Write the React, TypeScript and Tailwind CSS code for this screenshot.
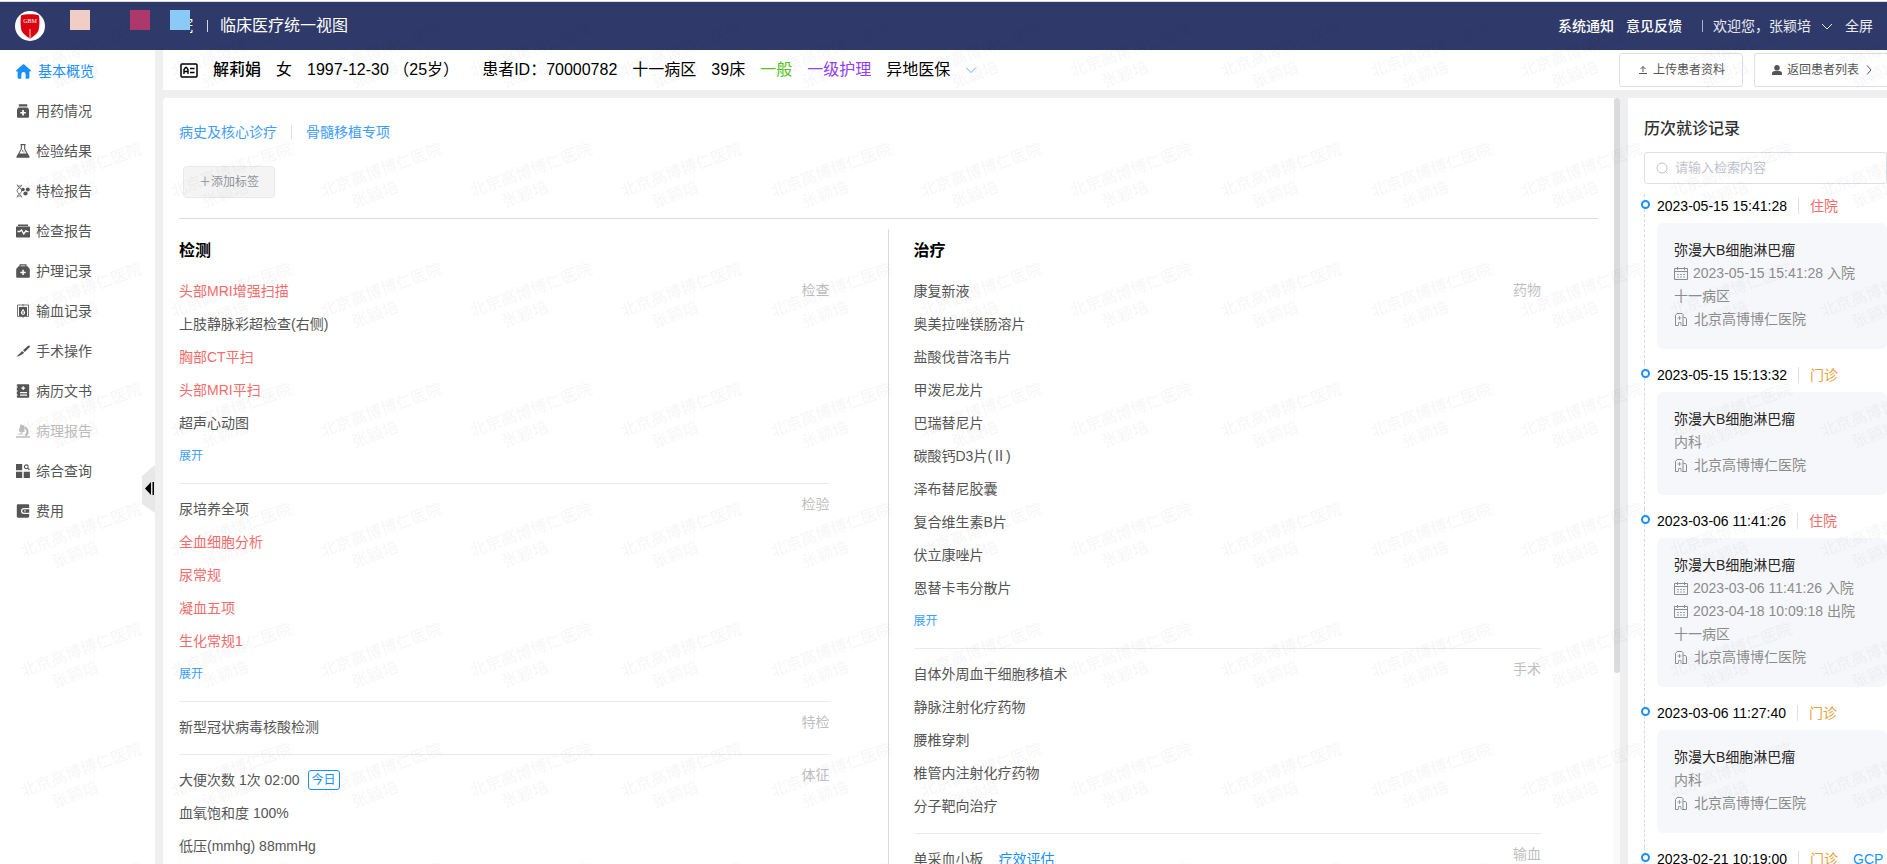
import { clsx } from "clsx";
import type { ReactNode } from "react";

type MenuItem = {
  label: string;
  icon: ReactNode;
  active?: boolean;
  disabled?: boolean;
};

type Entry = {
  text: string;
  abnormal?: boolean;
  tag?: string;
  link?: string;
};

type Block = {
  label: string;
  entries: Entry[];
  expandable?: boolean;
};

type Visit = {
  time: string;
  type: "住院" | "门诊";
  extra?: string;
  diagnosis: string;
  dates?: string[];
  dept: string;
};

const HOSPITAL = "北京高博博仁医院";

const menuItems: MenuItem[] = [
  {
    label: "基本概览",
    active: true,
    icon: (
      <path d="M7 .3a1 1 0 0 1 .7.2l6 5.3c.5.5.3 1.2-.4 1.2h-.8v5.6c0 .7-.4 1.1-1.1 1.1H9V9.5a2 2 0 0 0-4 0v4.2H2.6c-.7 0-1.1-.4-1.1-1.1V7H.7C0 7-.2 6.300.3 5.800l6-5.300A1 1 0 0 1 7 .3Z" />
    ),
  },
  {
    label: "用药情况",
    icon: (
      <path
        fillRule="evenodd"
        d="M2.800.2h8.400v2.300H2.800ZM2.500 3.600h9L13 5.500v7c0 .8-.5 1.300-1.300 1.300H2.300c-.8 0-1.300-.5-1.300-1.300v-7ZM6.200 6v1.900H4.300v1.700h1.900v1.900h1.700V9.600h1.900V7.900H7.900V6Z"
      />
    ),
  },
  {
    label: "检验结果",
    icon: (
      <>
        <path
          d="M4.500.6h5M5.300.8v4.400L1.200 12.500h11.600L8.700 5.200V.8"
          fill="none"
          stroke="currentColor"
          strokeWidth="1.100"
        />
        <path d="M2.800 9.500h8.400l2.500 4.300H.3ZM6 6.300h1.200v1.200H6ZM7.500 7.500h1v1h-1Z" />
      </>
    ),
  },
  {
    label: "特检报告",
    icon: (
      <>
        <path
          d="M1 .6c.5 3.200 4.800 3.200 4.800 6.200S1 10.200 1 13.500M5.800.6C5.300 4 1 4 1 6.800s4.300 3.300 4.800 6.700M1.600 2h3.500M1.600 12h3.500"
          fill="none"
          stroke="currentColor"
          strokeWidth=".8"
        />
        <circle cx="7" cy="5.500" r="1.800" />
        <circle cx="11.800" cy="5.500" r="2" />
        <circle cx="9.500" cy="9.500" r="2.100" />
      </>
    ),
  },
  {
    label: "检查报告",
    icon: (
      <>
        <path d="M2 .5h10v1.400H2ZM1 2.500h12c.6 0 1 .4 1 1v9c0 .6-.4 1-1 1H1c-.6 0-1-.4-1-1v-9c0-.6.4-1 1-1Z" />
        <path
          d="M1.500 7.500h2.300L5.500 6l2.300 4 2.100-3.200 1 .8h1.700"
          fill="none"
          stroke="#fff"
          strokeWidth="1.400"
        />
      </>
    ),
  },
  {
    label: "护理记录",
    icon: (
      <path
        fillRule="evenodd"
        d="M3.500.3h7v2h1L13.800 5v7.700c0 .6-.4 1-1 1H1.200c-.6 0-1-.4-1-1V5l2.300-2.700h1Zm1.200 1.200v.8h4.600v-.8ZM6.300 5.800v1.900H4.400v1.500h1.900v1.900h1.500V9.200h1.900V7.700H7.800V5.800Z"
      />
    ),
  },
  {
    label: "输血记录",
    icon: (
      <>
        <path
          d="M1.500 1h11v11.500h-11ZM7 0v2.500M7 12v2"
          fill="none"
          stroke="currentColor"
          strokeWidth=".8"
        />
        <path
          fillRule="evenodd"
          d="M3 3h8v9H3ZM7 4.800 5 8a2.100 2.100 0 1 0 4 0Z"
        />
        <path d="M6.500 7h1v3h-1Z" />
      </>
    ),
  },
  {
    label: "手术操作",
    icon: (
      <path d="M13.600 1.800c.6.600.4 1.200-.2 1.700L8.800 8 7 6.300l4.800-4.200c.6-.5 1.300-.8 1.800-.3ZM6.300 6.900 8.100 8.700C6 10.800 3.300 12.200.5 12.500Z" />
    ),
  },
  {
    label: "病历文书",
    icon: (
      <path
        fillRule="evenodd"
        d="M1.500.2h11c.4 0 .7.300.7.700v12.200c0 .4-.3.700-.7.700h-11c-.4 0-.7-.3-.7-.7v-1.500h1v-1h-1V7.500h1v-1h-1V3.500h1v-1h-1V.9c0-.4.3-.7.700-.7ZM6.600 2.300v1.300H5.300v1.200h1.300v1.300h1.200V4.800h1.300V3.600H7.800V2.300ZM4 8v1.200h7V8Zm0 2.500v1.200h7v-1.200Z"
      />
    ),
  },
  {
    label: "病理报告",
    disabled: true,
    icon: (
      <>
        <path d="M4.500.3 8.300 1.500 8.500 7.500 5.500 9 2.800 7Z" />
        <path
          d="M8.500 3.500c3.500 1 4.300 6 .8 8.500"
          fill="none"
          stroke="currentColor"
          strokeWidth="2"
        />
        <path d="M0 12.200h14v1.500H0ZM2.300 9.600h4.500v1H2.300Z" />
      </>
    ),
  },
  {
    label: "综合查询",
    icon: (
      <>
        <path d="M0 0h6.200v6.200H0ZM0 7.700h6.200v6.200H0ZM7.700 7.700h6.200v6.200H7.700Z" />
        <path
          d="M10.300.9a1.900 1.900 0 1 0 0 3.800 1.900 1.900 0 0 0 0-3.800ZM11.700 4.200l1.700 1.800"
          fill="none"
          stroke="currentColor"
          strokeWidth="1.100"
        />
      </>
    ),
  },
  {
    label: "费用",
    icon: (
      <>
        <path
          fillRule="evenodd"
          d="M2.200.3h9.600c.9 0 1.400.5 1.400 1.400V4H8a3 3 0 0 0 0 6h5.200v2.300c0 .9-.5 1.400-1.400 1.400H2.200c-.9 0-1.400-.5-1.400-1.400V1.700c0-.9.5-1.400 1.400-1.400Z"
        />
        <path
          fillRule="evenodd"
          d="M8 5.200h5.200v3.600H8a1.800 1.800 0 0 1 0-3.600Zm.2 1.100v1.300h1.500V6.300Z"
        />
      </>
    ),
  },
];

const testBlocks: Block[] = [
  {
    label: "检查",
    expandable: true,
    entries: [
      { text: "头部MRI增强扫描", abnormal: true },
      { text: "上肢静脉彩超检查(右侧)" },
      { text: "胸部CT平扫", abnormal: true },
      { text: "头部MRI平扫", abnormal: true },
      { text: "超声心动图" },
    ],
  },
  {
    label: "检验",
    expandable: true,
    entries: [
      { text: "尿培养全项" },
      { text: "全血细胞分析", abnormal: true },
      { text: "尿常规", abnormal: true },
      { text: "凝血五项", abnormal: true },
      { text: "生化常规1", abnormal: true },
    ],
  },
  { label: "特检", entries: [{ text: "新型冠状病毒核酸检测" }] },
  {
    label: "体征",
    entries: [
      { text: "大便次数 1次 02:00", tag: "今日" },
      { text: "血氧饱和度 100%" },
      { text: "低压(mmhg) 88mmHg" },
    ],
  },
];

const treatmentBlocks: Block[] = [
  {
    label: "药物",
    expandable: true,
    entries: [
      { text: "康复新液" },
      { text: "奥美拉唑镁肠溶片" },
      { text: "盐酸伐昔洛韦片" },
      { text: "甲泼尼龙片" },
      { text: "巴瑞替尼片" },
      { text: "碳酸钙D3片(Ⅱ)" },
      { text: "泽布替尼胶囊" },
      { text: "复合维生素B片" },
      { text: "伏立康唑片" },
      { text: "恩替卡韦分散片" },
    ],
  },
  {
    label: "手术",
    entries: [
      { text: "自体外周血干细胞移植术" },
      { text: "静脉注射化疗药物" },
      { text: "腰椎穿刺" },
      { text: "椎管内注射化疗药物" },
      { text: "分子靶向治疗" },
    ],
  },
  { label: "输血", entries: [{ text: "单采血小板", link: "疗效评估" }] },
];

const visits: Visit[] = [
  {
    time: "2023-05-15 15:41:28",
    type: "住院",
    diagnosis: "弥漫大B细胞淋巴瘤",
    dates: ["2023-05-15 15:41:28 入院"],
    dept: "十一病区",
  },
  {
    time: "2023-05-15 15:13:32",
    type: "门诊",
    diagnosis: "弥漫大B细胞淋巴瘤",
    dept: "内科",
  },
  {
    time: "2023-03-06 11:41:26",
    type: "住院",
    diagnosis: "弥漫大B细胞淋巴瘤",
    dates: ["2023-03-06 11:41:26 入院", "2023-04-18 10:09:18 出院"],
    dept: "十一病区",
  },
  {
    time: "2023-03-06 11:27:40",
    type: "门诊",
    diagnosis: "弥漫大B细胞淋巴瘤",
    dept: "内科",
  },
  {
    time: "2023-02-21 10:19:00",
    type: "门诊",
    extra: "GCP",
    diagnosis: "弥漫大B细胞淋巴瘤",
    dept: "内科",
  },
];

const Chevron = ({ className, d }: { className: string; d: string }) => (
  <svg viewBox="0 0 12 12" className={className} fill="none" stroke="currentColor">
    <path d={d} />
  </svg>
);

const Logo = () => (
  <svg viewBox="0 0 30 30" className="size-[30px]">
    <circle cx="15" cy="15" r="15" fill="#fff" />
    <path
      d="M6 4.500c3-1.700 15-1.700 18 0 .6 5 .8 10-.5 15-1.500 3.500-5 6-8.500 8-3.500-2-7-4.500-8.500-8-1.300-5-1.100-10-.5-15Z"
      fill="#d9040f"
    />
    <path d="M15 18v9" stroke="#f08a8a" strokeWidth="1.500" />
    <text
      x="15"
      y="12"
      textAnchor="middle"
      fontSize="6"
      fill="#fff"
      fontFamily="Liberation Serif, serif"
    >
      GBM
    </text>
  </svg>
);

const CalendarIcon = () => (
  <svg viewBox="0 0 14 14" className="size-3.5" fill="none" stroke="currentColor">
    <path d="M.5 1.500h13v11H.5ZM.5 4.500h13M3.500 0v3M10.500 0v3" />
    <path d="M3 7.500h2M6 7.500h2M9 7.500h2M3 10h2M6 10h2M9 10h2" strokeWidth=".8" />
  </svg>
);

const HospitalIcon = () => (
  <svg viewBox="0 0 14 14" className="size-3.5" fill="none" stroke="currentColor">
    <path d="M4 12.500H1.500v-10L3 .5h5l1 1v11H8M9.500 4.500h2l1 1.500v6.500H8" />
    <path d="M5.500 3v4M3.500 5h4M4.500 12.500V9.500h2.500v3" strokeWidth=".8" />
  </svg>
);

const Header = () => (
  <header className="flex h-[49px] shrink-0 items-center justify-between border-t border-[#d9dbe2] bg-[#2f3a6b] pl-[15px] pr-3.5 text-white">
    <div className="flex h-full items-center">
      <Logo />
      <div className="ml-[25px] flex self-start pt-2">
        <span className="mr-10 size-5 bg-[#f0cdc5]" />
        <span className="mr-5 size-5 bg-[#ad396b]" />
        <span className="size-5 bg-[#8ccaf6]" />
      </div>
      <span className="flex w-[3px] justify-end overflow-hidden text-base">院</span>
      <span className="ml-3.5 h-3 w-px bg-white/80" />
      <h1 className="ml-3 text-base">临床医疗统一视图</h1>
    </div>
    <div className="flex items-center text-sm">
      <a href="#notice" className="mr-3 font-medium">
        系统通知
      </a>
      <a href="#feedback" className="font-medium">
        意见反馈
      </a>
      <span className="ml-5 h-3 w-px bg-white/60" />
      <button className="ml-2.5 flex items-center gap-2.5 text-white/90">
        欢迎您，张颖培
        <Chevron className="size-3" d="M1 4l5 5 5-5" />
      </button>
      <button className="ml-3 text-white/90">全屏</button>
    </div>
  </header>
);

const Sidebar = () => (
  <nav className="relative w-[155px] shrink-0 bg-white pt-px">
    <ul>
      {menuItems.map((item) => (
        <li key={item.label}>
          <a
            href="#menu"
            className={clsx(
              "flex h-10 items-center pl-4 text-sm",
              item.active && "gap-[7px] text-[#1890ff]",
              !item.active && "gap-1.5",
              item.disabled && "text-[#bdbdbd]",
              !item.active && !item.disabled && "text-[#555]"
            )}
          >
            <svg
              viewBox="0 0 14 14"
              fill="currentColor"
              className={item.active ? "size-[15px]" : "size-3.5"}
            >
              {item.icon}
            </svg>
            {item.label}
          </a>
        </li>
      ))}
    </ul>
    <button aria-label="收起菜单" className="absolute right-0 top-[415px]">
      <svg viewBox="0 0 13 48" className="h-12 w-[13px]">
        <path d="M13 0v48L0 39V11Z" fill="#e8e8e8" />
        <path d="M9 17v13l-6-6.500ZM10.500 17h1.500v13h-1.500Z" fill="#000" />
      </svg>
    </button>
  </nav>
);

const PatientBar = () => (
  <section className="flex h-10 shrink-0 items-center justify-between bg-white pl-[17px]">
    <div className="flex items-center gap-[15px] whitespace-nowrap text-base text-black">
      <svg viewBox="0 0 18 15" className="h-[15px] w-[18px]" fill="none" stroke="currentColor">
        <rect x="1" y="1" width="16" height="13" rx="1" strokeWidth="1.500" />
        <path d="M4 11V6.500L5.500 4.500h1L8 6.500V11M4 8.500h4M10 5.500h4.500M10 9.500h4.500" strokeWidth="1.400" />
      </svg>
      <strong className="font-medium">解莉娟</strong>
      <span>女</span>
      <span className="mr-2">1997-12-30 （25岁）</span>
      <span>患者ID：70000782</span>
      <span>十一病区</span>
      <span>39床</span>
      <span className="text-[#52c41a]">一般</span>
      <span className="text-[#9240fb]">一级护理</span>
      <span>异地医保</span>
      <button aria-label="更多信息" className="text-[#6cb2ff]">
        <Chevron className="size-3" d="M1 3.500 6 8.500 11 3.500" />
      </button>
    </div>
    <div className="flex gap-[11px] text-xs text-[#555]">
      <button className="flex h-[34px] w-[124px] items-center justify-center gap-1 rounded-[3px] border border-[#dcdfe6]">
        <svg viewBox="0 0 12 12" className="size-3" fill="none" stroke="currentColor">
          <path d="M6 8V2.500M3.500 5 6 2.500 8.500 5M2 9.500h8" />
        </svg>
        上传患者资料
      </button>
      <button className="flex h-[34px] w-[133px] items-center gap-1 rounded-l-[3px] border border-r-0 border-[#dcdfe6] pl-4">
        <svg viewBox="0 0 12 12" className="size-3" fill="currentColor">
          <circle cx="6" cy="3.800" r="2.800" />
          <path d="M1 11V9.200C1 7.700 2.500 7 4 7h4c1.500 0 3 .7 3 2.200V11Z" />
        </svg>
        返回患者列表
        <Chevron className="size-3" d="M4 1.500 8 6l-4 4.500" />
      </button>
    </div>
  </section>
);

const BlockList = ({ title, blocks }: { title: string; blocks: Block[] }) => (
  <>
    <h2 className="h-[37px] pt-2.5 text-base font-bold leading-6 text-black">{title}</h2>
    {blocks.map((block, i) => (
      <div
        key={block.label}
        className={clsx(
          "flex justify-between pb-[11px] pt-2 text-sm text-[#555]",
          i > 0 && "border-t border-[#ebebeb]"
        )}
      >
        <ul>
          {block.entries.map((entry) => (
            <li
              key={entry.text}
              className={clsx("flex h-[33px] items-center", entry.abnormal && "text-[#f56c6c]")}
            >
              {entry.text}
              {entry.tag && (
                <span className="ml-2 rounded-[3px] border border-[#1890ff] px-[3px] text-xs leading-[18px] text-[#1890ff]">
                  {entry.tag}
                </span>
              )}
              {entry.link && (
                <a href="#evaluate" className="ml-[15px] text-[#1890ff]">
                  {entry.link}
                </a>
              )}
            </li>
          ))}
          {block.expandable && (
            <li className="flex h-[33px] items-center">
              <button className="text-xs text-[#409eff]">展开</button>
            </li>
          )}
        </ul>
        <span className={clsx("text-[#bfbfbf]", i > 0 ? "leading-6" : "leading-8")}>
          {block.label}
        </span>
      </div>
    ))}
  </>
);

const Overview = () => (
  <main className="flex min-w-0 flex-1 overflow-hidden rounded-tl-[4px] bg-white">
    <div className="flex min-w-0 flex-1 flex-col px-4">
      <div className="flex shrink-0 items-center pt-6 text-sm leading-5 text-[#409eff]">
        <a href="#history">病史及核心诊疗</a>
        <span className="mx-3.5 h-3.5 w-px bg-[#dcdfe6]" />
        <a href="#transplant">骨髓移植专项</a>
      </div>
      <div className="shrink-0 border-b border-[#dcdcdc] pb-5 pl-1 pt-6">
        <button className="block h-8 rounded border border-[#e9e9eb] bg-[#f4f4f5] px-[15px] text-xs text-[#909399]">
          ＋添加标签
        </button>
      </div>
      <div className="mt-2.5 grid min-h-0 flex-1 grid-cols-2">
        <section className="border-r border-[#dcdcdc] pr-[58px]">
          <BlockList title="检测" blocks={testBlocks} />
        </section>
        <section className="pl-[25px] pr-[57px]">
          <BlockList title="治疗" blocks={treatmentBlocks} />
        </section>
      </div>
    </div>
    <div className="w-1.5 shrink-0 bg-[#fafafa]">
      <div className="h-3/4 rounded-full bg-[#d9dbdd]" />
    </div>
  </main>
);

const VisitItem = ({ visit }: { visit: Visit }) => (
  <li className="relative border-l border-dashed border-[#d9d9d9] pb-3.5 pl-3">
    <span className="absolute -left-1 top-1.5 size-[9px] rounded-full border-2 border-[#1890ff] bg-white" />
    <div className="flex h-6 items-center text-sm">
      <time className="text-black">{visit.time}</time>
      <span className="mx-[11px] h-4 w-px bg-[#dcdfe6]" />
      <span className={visit.type === "住院" ? "text-[#f56c6c]" : "text-[#e6a23c]"}>
        {visit.type}
      </span>
      {visit.extra && <span className="ml-[15px] text-[#1890ff]">{visit.extra}</span>}
    </div>
    <div className="mt-[5px] rounded-md bg-[#f6f7fa] pb-[18px] pl-[17px] pt-4 text-sm leading-[23px] text-[#8c8c8c]">
      <h3 className="text-[#262626]">{visit.diagnosis}</h3>
      {visit.dates?.map((date) => (
        <p key={date} className="flex items-center gap-[5px] whitespace-nowrap">
          <CalendarIcon />
          {date}
        </p>
      ))}
      <p>{visit.dept}</p>
      <p className="flex items-center gap-1.5">
        <HospitalIcon />
        {HOSPITAL}
      </p>
    </div>
  </li>
);

const VisitHistory = () => (
  <aside className="w-[259px] shrink-0 overflow-hidden bg-white pl-4">
    <h2 className="pt-[19px] text-base font-medium leading-6 text-[#303133]">历次就诊记录</h2>
    <label className="mt-[11px] flex h-8 items-center gap-[7px] rounded-[3px] border border-[#dcdfe6] pl-[11px]">
      <svg viewBox="0 0 12 12" className="size-3 shrink-0 text-[#c0c4cc]" fill="none" stroke="currentColor">
        <circle cx="6" cy="6" r="5" />
        <path d="M9.500 9.500l2 2" />
      </svg>
      <input
        type="text"
        aria-label="检索内容"
        placeholder="请输入检索内容"
        className="min-w-0 flex-1 text-[13px] outline-none placeholder:text-[#c0c4cc]"
      />
    </label>
    <ul className="mt-2.5">
      {visits.map((visit) => (
        <VisitItem key={visit.time} visit={visit} />
      ))}
    </ul>
  </aside>
);

const Watermark = () => (
  <svg className="pointer-events-none absolute inset-0 z-50 size-full" aria-hidden="true">
    <defs>
      <pattern id="mark" x="11" y="20" width="150" height="120" patternUnits="userSpaceOnUse">
        <g transform="translate(12 57) rotate(-20)" fontSize="16" fill="#000" fillOpacity=".035">
          <text>{HOSPITAL}</text>
          <text x="26" y="21">
            张颖培
          </text>
        </g>
      </pattern>
    </defs>
    <rect width="100%" height="100%" fill="url(#mark)" />
  </svg>
);

export default function App() {
  return (
    <div className="relative flex h-screen flex-col overflow-hidden bg-white pt-px font-['Liberation_Sans','Noto_Sans_CJK_SC',sans-serif]">
      <Header />
      <div className="flex min-h-0 flex-1 gap-2 bg-[#efefef]">
        <Sidebar />
        <div className="flex min-w-0 flex-1 flex-col gap-2">
          <PatientBar />
          <div className="flex min-h-0 flex-1 gap-2">
            <Overview />
            <VisitHistory />
          </div>
        </div>
      </div>
      <Watermark />
    </div>
  );
}
